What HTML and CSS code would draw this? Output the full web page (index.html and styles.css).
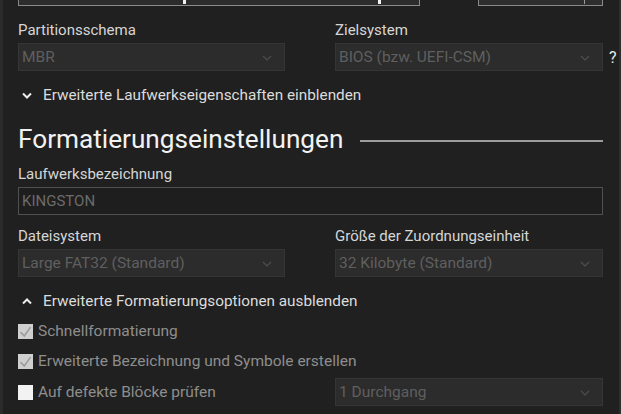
FILE: index.html
```html
<!DOCTYPE html>
<html lang="de">
<head>
<meta charset="UTF-8">
<meta name="viewport" content="width=device-width, initial-scale=1.0">
<title>Rufus</title>
<link rel="stylesheet" href="styles.css">
</head>
<body>
<div class="window">

<div class="top-row">
<div class="combo"><span class="mark m1"></span><span class="mark m2"></span></div>
<div class="hash-icon"></div>
<div class="split-btn"><span class="mark m3"></span></div>
</div>

<div class="grid">
<div class="field">
<label>Partitionsschema</label>
<div class="select">MBR<svg class="arrow" viewBox="0 0 10 6"><path d="M1 1l4 4 4-4" /></svg></div>
</div>
<div class="field">
<label>Zielsystem</label>
<div class="select-wrap">
<div class="select">BIOS (bzw. UEFI-CSM)<svg class="arrow" viewBox="0 0 10 6"><path d="M1 1l4 4 4-4" /></svg></div>
<span class="help">?</span>
</div>
</div>
</div>

<div class="toggle">
<svg class="chev" viewBox="0 0 10 7"><path d="M1 1.5l4 4 4-4" /></svg>
Erweiterte Laufwerkseigenschaften einblenden
</div>

<h2 class="section">Formatierungseinstellungen<span class="rule"></span></h2>

<div class="field wide">
<label>Laufwerksbezeichnung</label>
<div class="textbox">KINGSTON</div>
</div>

<div class="grid fs">
<div class="field">
<label>Dateisystem</label>
<div class="select">Large FAT32 (Standard)<svg class="arrow" viewBox="0 0 10 6"><path d="M1 1l4 4 4-4" /></svg></div>
</div>
<div class="field">
<label>Größe der Zuordnungseinheit</label>
<div class="select">32 Kilobyte (Standard)<svg class="arrow" viewBox="0 0 10 6"><path d="M1 1l4 4 4-4" /></svg></div>
</div>
</div>

<div class="toggle">
<svg class="chev" viewBox="0 0 10 7"><path d="M1 5.5l4-4 4 4" /></svg>
Erweiterte Formatierungsoptionen ausblenden
</div>

<div class="check-row">
<span class="box checked"><svg viewBox="0 0 12 12"><path d="M2 6.5l3 3 5-7" /></svg></span>
Schnellformatierung
</div>
<div class="check-row">
<span class="box checked"><svg viewBox="0 0 12 12"><path d="M2 6.5l3 3 5-7" /></svg></span>
Erweiterte Bezeichnung und Symbole erstellen
</div>
<div class="grid last">
<div class="check-row">
<span class="box"></span>
Auf defekte Blöcke prüfen
</div>
<div class="select">1 Durchgang<svg class="arrow" viewBox="0 0 10 6"><path d="M1 1l4 4 4-4" /></svg></div>
</div>

</div>
</body>
</html>
```

FILE: styles.css
```css
body {
margin: 0;
background-color: #202020;
font-family: Roboto, "Noto Sans", sans-serif;
font-size: 15px;
color: #d6d6d6;
}

.window {
min-height: 414px;
box-sizing: border-box;
border-left: 3px solid #2b2b2b;
border-right: 2px solid #2e2e2e;
padding: 1px 16px 0 15px;
overflow: hidden;
}

/* row above, mostly scrolled out of view */
.top-row {
display: flex;
align-items: flex-end;
margin-top: -25px;
height: 30px;
}

.combo {
position: relative;
width: 400px;
height: 28px;
border: 1px solid #8a8a8a;
background-color: #2c2c2c;
}

.hash-icon {
width: 18px;
height: 18px;
border: 1px solid #5a5a5a;
border-radius: 50%;
margin: 0 0 8px 19px;
}

.split-btn {
position: relative;
width: 123px;
height: 28px;
margin-left: 19px;
border: 1px solid #8a8a8a;
background-color: #2e2e2e;
}

.mark {
position: absolute;
bottom: 1px;
width: 3px;
height: 4px;
background-color: #f2f2f2;
}
.m1 { left: 164px; }
.m2 { left: 359px; }
.m3 { left: 105px; width: 1px; background-color: #9a9a9a; }

.grid {
display: grid;
grid-template-columns: 267px 268px;
column-gap: 50px;
}

.field label {
display: block;
line-height: 20px;
margin-top: 14px;
margin-bottom: 3px;
}

.select-wrap {
display: flex;
align-items: center;
}

.select {
position: relative;
flex: 1;
height: 28px;
box-sizing: border-box;
line-height: 26px;
padding-left: 3px;
background-color: #2c2c2c;
border: 1px solid #353535;
color: #5f5f5f;
font-size: 15.5px;
}

.arrow {
position: absolute;
right: 12px;
top: 11px;
width: 10px;
height: 6px;
fill: none;
stroke: #4e4e4e;
stroke-width: 1.2;
}

.help {
width: 0;
margin: 0 -6px 0 6px;
color: #e8e8e8;
font-size: 16px;
}

.toggle {
display: flex;
align-items: center;
margin-top: 14px;
line-height: 20px;
font-size: 15.3px;
color: #dcdcdc;
}

.chev {
width: 10px;
height: 7px;
margin: 0 11px 0 4px;
fill: none;
stroke: #ececec;
stroke-width: 2;
}

.section {
display: flex;
align-items: center;
margin: 18px 0 0;
font-size: 26.2px;
font-weight: 400;
color: #f2f2f2;
line-height: 32px;
}

.rule {
flex: 1;
height: 2px;
margin: 4px 0 0 17px;
background-color: #9c9c9c;
}

.wide label {
margin-top: 9px;
}

.fs .field label {
margin-top: 11px;
}

.textbox {
height: 28px;
box-sizing: border-box;
line-height: 26px;
padding-left: 3px;
border: 1px solid #505050;
background-color: #1e1e1e;
color: #6b6b6b;
font-size: 15px;
}

.check-row {
display: flex;
align-items: center;
margin-top: 10px;
line-height: 20px;
color: #8e8e8e;
font-size: 15.5px;
}

.box {
width: 15px;
height: 15px;
margin-right: 5px;
background-color: #f2f2f2;
}

.box.checked {
background-color: #cfcfcf;
}

.box svg {
display: block;
width: 15px;
height: 15px;
fill: none;
stroke: #9d9d9d;
stroke-width: 1.3;
}

.grid.last {
align-items: center;
margin-top: 7px;
}

.grid.last .check-row {
margin-top: 0;
}
```
